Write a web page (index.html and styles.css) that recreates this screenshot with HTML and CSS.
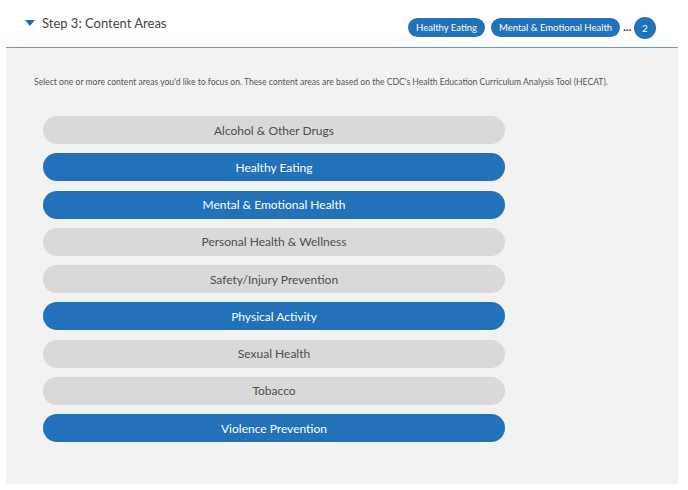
FILE: index.html
```html
<!DOCTYPE html>
<html>
<head>
<meta charset="utf-8">
<link rel="stylesheet" href="styles.css">
</head>
<body>
<div class="step">
  <div class="step-header">
    <div class="title">
      <svg class="caret" width="10" height="6" viewBox="0 0 10 6"><path d="M0 0 H10 L5 6 Z" fill="#1f6fb5"/></svg>
      <span>Step 3: Content Areas</span>
    </div>
    <div class="selected">
      <span class="tag">Healthy Eating</span>
      <span class="tag">Mental &amp; Emotional Health</span>
      <span class="more">...</span>
      <span class="count">2</span>
    </div>
  </div>
  <div class="panel">
    <p class="desc">Select one or more content areas you'd like to focus on. These content areas are based on the CDC's Health Education Curriculum Analysis Tool (HECAT).</p>
    <div class="options">
      <button class="opt">Alcohol &amp; Other Drugs</button>
      <button class="opt on">Healthy Eating</button>
      <button class="opt on">Mental &amp; Emotional Health</button>
      <button class="opt">Personal Health &amp; Wellness</button>
      <button class="opt">Safety/Injury Prevention</button>
      <button class="opt on">Physical Activity</button>
      <button class="opt">Sexual Health</button>
      <button class="opt">Tobacco</button>
      <button class="opt on">Violence Prevention</button>
    </div>
  </div>
</div>
</body>
</html>
```
FILE: styles.css
```css
* { box-sizing: border-box; }
html, body { margin: 0; padding: 0; background: #fff; }
body { font-family: "Lato", "Open Sans", sans-serif; color: #4a4a4a; }

.step { margin-left: 6px; width: 672px; }

.step-header {
  height: 48px;
  display: flex;
  justify-content: space-between;
  padding: 0 22px 0 19px;
  border-bottom: 1px solid #6a9ac6;
}
.title {
  display: flex;
  align-items: center;
  gap: 7px;
  height: 45px;
  font-size: 13px;
  color: #444;
}
.caret { display: block; margin-top: 1px; }

.selected {
  display: flex;
  align-items: center;
  height: 55px;
  gap: 6px;
}
.tag {
  background: #2172b8;
  color: #fff;
  font-size: 9.5px;
  height: 19px;
  line-height: 19px;
  padding: 0 8px;
  border-radius: 10px;
}
.more {
  font-size: 11px;
  font-weight: 700;
  color: #333;
  margin: 0 -3px 0 -3px;
  line-height: 1;
  padding-bottom: 3px;
}
.count {
  width: 22px;
  height: 22px;
  border-radius: 50%;
  background: #2172b8;
  color: #fff;
  font-size: 10px;
  display: flex;
  align-items: center;
  justify-content: center;
}

.panel {
  background: #f2f2f2;
  height: 436px;
  padding: 29px 0 0 28px;
}
.desc {
  margin: 0;
  font-size: 8.6px;
  color: #555;
  line-height: 10px;
}
.options {
  margin: 29px 0 0 9px;
  width: 462px;
  display: flex;
  flex-direction: column;
  gap: 9.25px;
}
.opt {
  height: 28px;
  border: none;
  border-radius: 14px;
  background: #d9d9d9;
  color: #4d4d4d;
  font-family: "Lato", "Open Sans", sans-serif;
  font-size: 12px;
  padding: 0;
  text-align: center;
}
.opt.on { background: #2172b8; color: #fff; }
```
